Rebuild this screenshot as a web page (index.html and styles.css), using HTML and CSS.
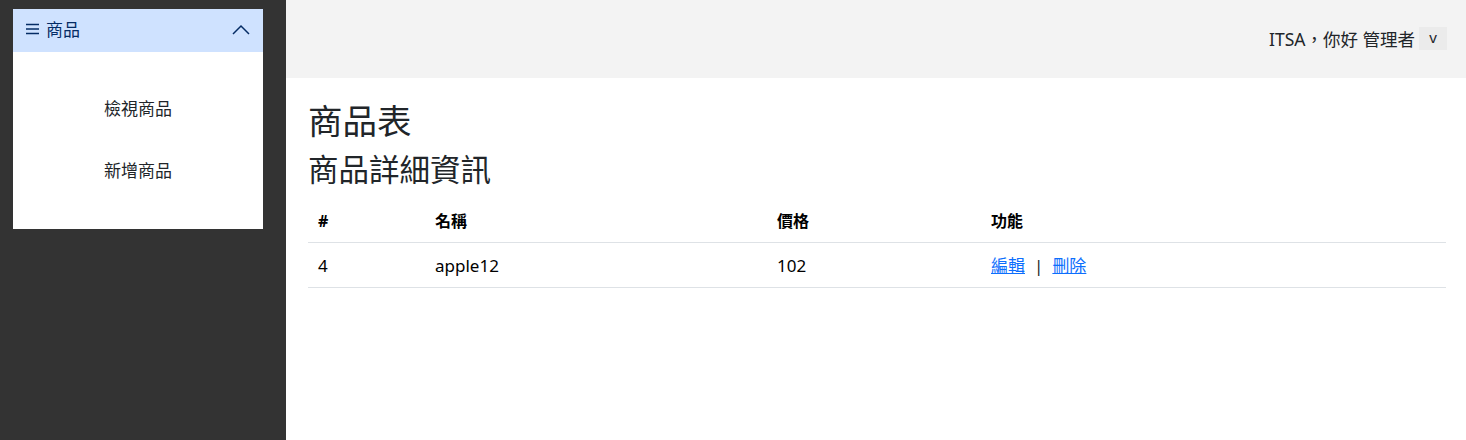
FILE: index.html
```html
<!DOCTYPE html>
<html lang="zh-Hant">
<head>
<meta charset="utf-8">
<title>商品表</title>
<link rel="stylesheet" href="styles.css">
</head>
<body>
<div class="layout">
  <aside class="sidebar">
    <div class="accordion">
      <div class="acc-head">
        <span class="acc-title">
          <svg class="burger" width="13" height="12" viewBox="0 0 13 12"><path d="M0 1.5 H13 M0 6 H13 M0 10.5 H13" fill="none" stroke="#052c65" stroke-width="1.3"/></svg>
          商品
        </span>
        <svg class="chev" width="18" height="11" viewBox="0 0 18 11"><path d="M1 10 L9 2 L17 10" fill="none" stroke="#052c65" stroke-width="1.5"/></svg>
      </div>
      <div class="acc-body">
        <a class="acc-link">檢視商品</a>
        <a class="acc-link">新增商品</a>
      </div>
    </div>
  </aside>
  <main class="main">
    <header class="topbar">
      <span class="greet">ITSA，你好 管理者</span>
      <span class="dd">v</span>
    </header>
    <section class="content">
      <h1 class="title">商品表</h1>
      <h2 class="subtitle">商品詳細資訊</h2>
      <table class="tbl">
        <colgroup>
          <col class="c1"><col class="c2"><col class="c3"><col class="c4">
        </colgroup>
        <thead>
          <tr><th>#</th><th>名稱</th><th>價格</th><th>功能</th></tr>
        </thead>
        <tbody>
          <tr><td>4</td><td>apple12</td><td>102</td><td><a class="lnk" href="#">編輯</a><span class="sep">|</span><a class="lnk" href="#">刪除</a></td></tr>
        </tbody>
      </table>
    </section>
  </main>
</div>
</body>
</html>
```
FILE: styles.css
```css
* { box-sizing: border-box; }
html, body { margin: 0; height: 100%; }
body {
  font-family: "Noto Sans", "Noto Sans CJK TC", sans-serif;
  color: #212529;
  font-size: 16px;
}
.layout { display: flex; height: 440px; }
.sidebar {
  width: 286px;
  background: #333333;
  padding: 9px 22px 0 13px;
  flex-shrink: 0;
}
.accordion { width: 250px; background: #fff; }
.acc-head {
  height: 43px;
  background: #cfe2ff;
  display: flex;
  align-items: center;
  justify-content: space-between;
  padding: 0 13px 0 13px;
  color: #052c65;
}
.acc-title {
  font-size: 17px;
  line-height: 1;
  display: flex;
  align-items: center;
  gap: 7px;
  margin-top: -3px;
}
.burger { display: block; }
.chev { display: block; margin-top: -2px; }
.acc-body {
  display: flex;
  flex-direction: column;
  align-items: center;
  padding: 45px 0 46px;
  gap: 38px;
}
.acc-link { font-size: 17px; color: #212529; line-height: 24px; }
.main { flex: 1; display: flex; flex-direction: column; }
.topbar {
  height: 78px;
  background: #f3f3f3;
  display: flex;
  align-items: center;
  justify-content: flex-end;
  padding: 0 19px 2px 0;
  gap: 4px;
}
.greet { font-size: 17.5px; color: #212529; }
.dd {
  width: 28px;
  height: 23px;
  background: #ebebeb;
  display: flex;
  align-items: center;
  justify-content: center;
  font-size: 15px;
  color: #212529;
  padding-bottom: 2px;
}
.content { padding: 19px 20px 0 22px; }
.title { font-size: 34.5px; font-weight: 400; margin: 0; line-height: 48px; }
.subtitle { font-size: 30.5px; font-weight: 400; margin: 2px 0 6px; line-height: 44px; }
.tbl { width: 100%; border-collapse: collapse; }
.c1 { width: 117px; }
.c2 { width: 342px; }
.c3 { width: 214px; }
.tbl th, .tbl td {
  text-align: left;
  padding: 10px 10px 8px;
  border-bottom: 1px solid #dee2e6;
  font-size: 17px;
  line-height: 26px;
}
.tbl th { font-weight: 700; color: #000; font-size: 16px; padding-top: 11px; }
.tbl td { color: #000; }
.lnk { color: #0d6efd; text-decoration: underline; }
.sep { margin: 0 9px; color: #212529; }
```
